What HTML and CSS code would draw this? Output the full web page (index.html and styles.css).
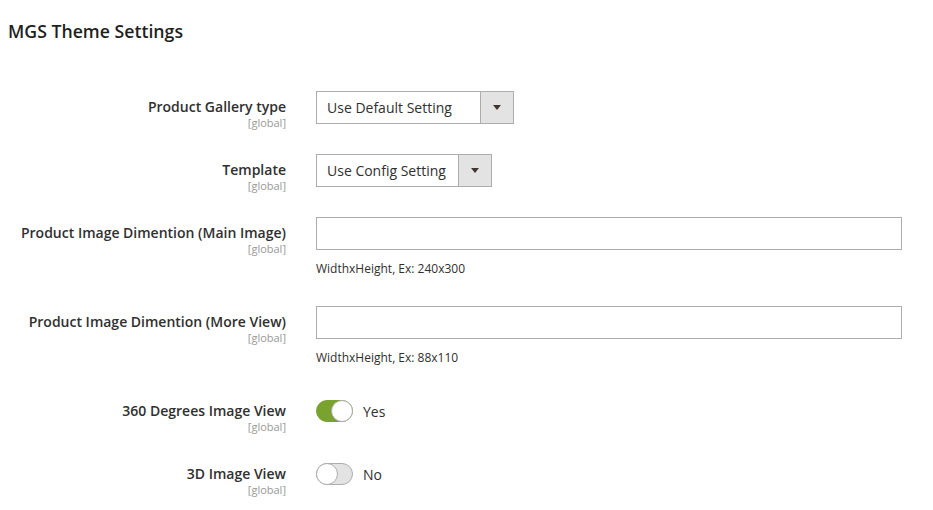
FILE: index.html
```html
<!DOCTYPE html>
<html>
<head>
<meta charset="utf-8">
<link rel="stylesheet" href="styles.css">
</head>
<body>
<div class="page">
  <h1 class="title">MGS Theme Settings</h1>
  <div class="form">
    <div class="row">
      <div class="label"><span class="label-text">Product Gallery type</span><span class="scope">[global]</span></div>
      <div class="control">
        <div class="select select-wide"><span class="select-value">Use Default Setting</span><span class="select-btn"><span class="arrow"></span></span></div>
      </div>
    </div>
    <div class="row">
      <div class="label"><span class="label-text">Template</span><span class="scope">[global]</span></div>
      <div class="control">
        <div class="select select-narrow"><span class="select-value">Use Config Setting</span><span class="select-btn"><span class="arrow"></span></span></div>
      </div>
    </div>
    <div class="row row-note">
      <div class="label"><span class="label-text">Product Image Dimention (Main Image)</span><span class="scope">[global]</span></div>
      <div class="control">
        <div class="input"></div>
        <div class="note">WidthxHeight, Ex: 240x300</div>
      </div>
    </div>
    <div class="row row-note">
      <div class="label"><span class="label-text">Product Image Dimention (More View)</span><span class="scope">[global]</span></div>
      <div class="control">
        <div class="input"></div>
        <div class="note">WidthxHeight, Ex: 88x110</div>
      </div>
    </div>
    <div class="row">
      <div class="label"><span class="label-text">360 Degrees Image View</span><span class="scope">[global]</span></div>
      <div class="control control-switch">
        <span class="switch switch-on"><span class="knob"></span></span><span class="switch-text">Yes</span>
      </div>
    </div>
    <div class="row">
      <div class="label"><span class="label-text">3D Image View</span><span class="scope">[global]</span></div>
      <div class="control control-switch">
        <span class="switch"><span class="knob"></span></span><span class="switch-text">No</span>
      </div>
    </div>
  </div>
</div>
</body>
</html>
```
FILE: styles.css
```css
html, body {
  margin: 0;
  padding: 0;
  background: #ffffff;
}
body {
  font-family: "Open Sans", "Noto Sans", sans-serif;
  color: #303030;
}
.page {
  padding: 21px 32px 0 8px;
}
.title {
  margin: 0;
  font-size: 17.7px;
  font-weight: 600;
  line-height: 20.4px;
  color: #1f1f1f;
}
.form {
  margin-top: 50px;
}
.row {
  display: grid;
  grid-template-columns: 278px 1fr;
  column-gap: 30px;
  margin-bottom: 25px;
}
.row-note {
  margin-bottom: 26px;
}
.label {
  display: flex;
  flex-direction: column;
  align-items: flex-end;
  text-align: right;
  padding-top: 7px;
}
.label-text {
  font-size: 14px;
  font-weight: 600;
  line-height: 18px;
  color: #303030;
}
.scope {
  font-size: 11px;
  line-height: 13px;
  color: #999999;
}
.control {
  display: flex;
  flex-direction: column;
  align-items: flex-start;
}
.select {
  box-sizing: border-box;
  height: 33px;
  border: 1px solid #adadad;
  display: flex;
  align-items: stretch;
  background: #fff;
}
.select-wide { width: 198px; }
.select-narrow { width: 176px; }
.select-value {
  flex: 1;
  font-size: 14px;
  line-height: 31px;
  padding-left: 10px;
  color: #303030;
}
.select-btn {
  width: 32px;
  background: #e3e3e3;
  border-left: 1px solid #adadad;
  display: flex;
  align-items: center;
  justify-content: center;
}
.arrow {
  width: 0;
  height: 0;
  border-left: 4px solid transparent;
  border-right: 4px solid transparent;
  border-top: 5px solid #41362f;
}
.input {
  box-sizing: border-box;
  width: 586px;
  height: 33px;
  border: 1px solid #adadad;
  background: #fff;
}
.note {
  margin-top: 8px;
  font-size: 12px;
  line-height: 22px;
  color: #303030;
}
.control-switch {
  flex-direction: row;
  align-items: center;
  height: 32px;
}
.switch {
  position: relative;
  box-sizing: border-box;
  width: 37px;
  height: 22px;
  border: 1px solid #adadad;
  border-radius: 12px;
  background: #e3e3e3;
  display: block;
}
.switch-on {
  background: #79a22e;
  border-color: #79a22e;
}
.knob {
  position: absolute;
  top: -1px;
  left: -1px;
  box-sizing: border-box;
  width: 22px;
  height: 22px;
  border-radius: 50%;
  background: #fff;
  border: 1px solid #adadad;
}
.switch-on .knob {
  left: auto;
  right: -1px;
}
.switch-text {
  margin-left: 10px;
  font-size: 14px;
  color: #303030;
}
```
